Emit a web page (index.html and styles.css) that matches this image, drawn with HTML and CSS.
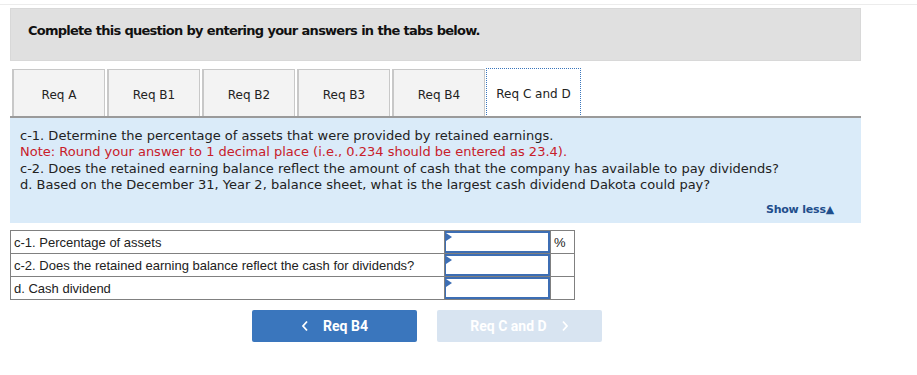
FILE: index.html
```html
<!DOCTYPE html>
<html lang="en">

<head>
    <meta charset="UTF-8">
    <meta name="viewport" content="width=device-width, initial-scale=1.0">
    <title>Req C and D</title>
    <link rel="stylesheet" href="styles.css">
</head>

<body>
    <div class="top-rule"></div>
    <div class="question">
        <div class="q-header">Complete this question by entering your answers in the tabs below.</div>
        <div class="tab-header">
            <span class="tab-items">Req A</span>
            <span class="tab-items">Req B1</span>
            <span class="tab-items">Req B2</span>
            <span class="tab-items">Req B3</span>
            <span class="tab-items">Req B4</span>
            <span class="tab-items active">Req C and D</span>
        </div>
        <div class="content-panel">
            <p>c-1. Determine the percentage of assets that were provided by retained earnings.</p>
            <p class="note">Note: Round your answer to 1 decimal place (i.e., 0.234 should be entered as 23.4).</p>
            <p>c-2. Does the retained earning balance reflect the amount of cash that the company has available to pay dividends?</p>
            <p>d. Based on the December 31, Year 2, balance sheet, what is the largest cash dividend Dakota could pay?</p>
            <div class="show-less">Show less&#9650;</div>
        </div>
        <table class="answers">
            <tr>
                <td class="label">c-1. Percentage of assets</td>
                <td class="cell"><span class="input"></span></td>
                <td class="unit">%</td>
            </tr>
            <tr>
                <td class="label">c-2. Does the retained earning balance reflect the cash for dividends?</td>
                <td class="cell"><span class="input"></span></td>
                <td class="unit"></td>
            </tr>
            <tr>
                <td class="label">d. Cash dividend</td>
                <td class="cell"><span class="input"></span></td>
                <td class="unit"></td>
            </tr>
        </table>
        <div class="nav">
            <button class="nav-btn prev">
                <svg class="chev" width="8" height="12" viewBox="0 0 8 12"><path d="M6 1.5 L2 6 L6 10.5" fill="none" stroke="#fff" stroke-width="1.8"/></svg>
                Req B4
            </button>
            <button class="nav-btn next disabled">
                Req C and D
                <svg class="chev" width="8" height="12" viewBox="0 0 8 12"><path d="M2 1.5 L6 6 L2 10.5" fill="none" stroke="#fff" stroke-width="1.8"/></svg>
            </button>
        </div>
    </div>
</body>

</html>
```

FILE: styles.css
```css
body {
    margin: 0;
    font-family: Verdana, "DejaVu Sans", sans-serif;
    color: #222;
    background: #fff;
}

.top-rule {
    height: 4px;
    border-bottom: 1px solid #ececec;
}

.question {
    width: 851px;
    margin: 3px 0 0 10px;
}

.q-header {
    height: 53px;
    box-sizing: border-box;
    background: #e0e0e0;
    border: 1px solid #d8d8d8;
    padding-left: 17px;
    font-size: 13px;
    font-weight: bold;
    line-height: 44px;
    color: #111;
    letter-spacing: -0.75px;
    word-spacing: 0.3px;
}

.tab-header {
    display: flex;
    align-items: flex-end;
    gap: 2px;
    margin-top: 7px;
    padding-left: 2px;
    height: 48px;
}

.tab-items {
    width: 93px;
    height: 47px;
    box-sizing: border-box;
    background: #f3f3f3;
    border: 1px solid #c8c8c8;
    border-bottom: none;
    border-left-width: 2px;
    font-size: 12px;
    line-height: 50px;
    text-align: center;
    color: #222;
    cursor: pointer;
}

.tab-items.active {
    width: 95px;
    height: 49px;
    margin-left: -1px;
    margin-bottom: -1px;
    background: #fff;
    border: 1px dotted #3a76bd;
    line-height: 51px;
}

.content-panel {
    height: 107px;
    box-sizing: border-box;
    background: #daebf9;
    border-top: 2px solid #9a9a9a;
    padding: 10px 10px 0 10px;
    font-size: 13px;
    line-height: 16.3px;
    position: relative;
}

.content-panel p {
    margin: 0;
}

.content-panel .note {
    color: #c8202a;
}

.show-less {
    position: absolute;
    right: 27px;
    bottom: 5px;
    font-size: 11px;
    font-weight: bold;
    color: #1f4e8c;
    letter-spacing: -0.2px;
}

.answers {
    margin-top: 7px;
    border-collapse: collapse;
    font-family: "Liberation Sans", Arial, sans-serif;
    font-size: 13px;
    line-height: 15px;
    color: #222;
}

.answers td {
    border: 1px solid #808080;
    height: 22px;
    padding: 0;
}

.answers .label {
    width: 430px;
    padding-left: 3px;
}

.answers .cell {
    width: 105px;
    vertical-align: top;
}

.answers .input {
    display: block;
    position: relative;
    height: 18px;
    border: 2px solid #3d6eb4;
    border-left-width: 1px;
}

.answers .input::before {
    content: "";
    position: absolute;
    left: 0;
    top: 0;
    border-left: 6px solid #3d6eb4;
    border-top: 4px solid transparent;
    border-bottom: 4px solid transparent;
}

.answers .unit {
    width: 20px;
    padding-left: 3px;
}

.nav {
    display: flex;
    gap: 20px;
    margin: 10px 0 0 242px;
}

.nav-btn {
    display: flex;
    align-items: center;
    justify-content: center;
    gap: 14px;
    width: 165px;
    height: 32px;
    border: none;
    border-radius: 2px;
    background: #3a76bd;
    color: #fff;
    font-family: Roboto, "Liberation Sans", sans-serif;
    font-size: 14px;
    font-weight: bold;
    cursor: pointer;
}

.nav-btn.disabled {
    background: #d8e4f1;
    cursor: default;
}
```
